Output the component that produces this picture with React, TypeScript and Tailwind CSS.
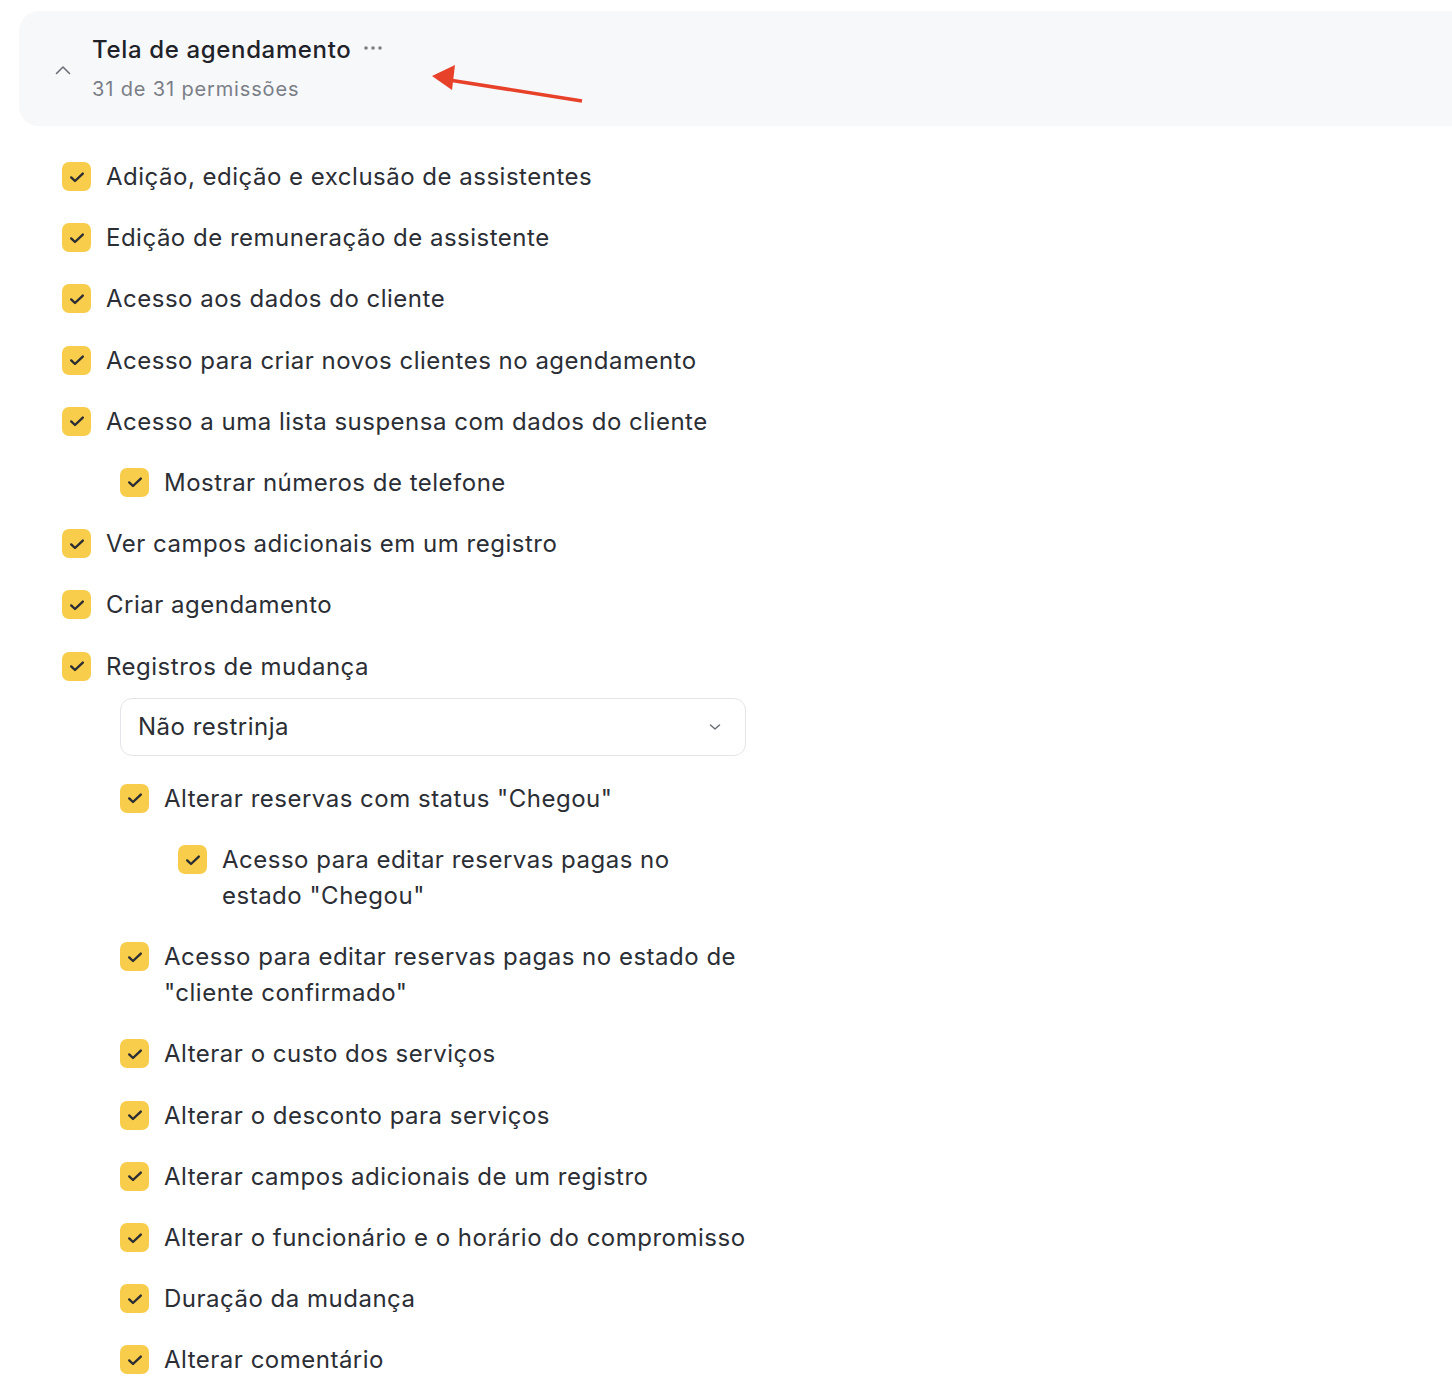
import React from "react";

type Row =
  | { kind: "check"; label: string; level: number }
  | { kind: "select"; value: string; level: number };

const rows: Row[] = [
  { kind: "check", level: 0, label: "Adição, edição e exclusão de assistentes" },
  { kind: "check", level: 0, label: "Edição de remuneração de assistente" },
  { kind: "check", level: 0, label: "Acesso aos dados do cliente" },
  { kind: "check", level: 0, label: "Acesso para criar novos clientes no agendamento" },
  { kind: "check", level: 0, label: "Acesso a uma lista suspensa com dados do cliente" },
  { kind: "check", level: 1, label: "Mostrar números de telefone" },
  { kind: "check", level: 0, label: "Ver campos adicionais em um registro" },
  { kind: "check", level: 0, label: "Criar agendamento" },
  { kind: "check", level: 0, label: "Registros de mudança" },
  { kind: "select", level: 1, value: "Não restrinja" },
  { kind: "check", level: 1, label: 'Alterar reservas com status "Chegou"' },
  { kind: "check", level: 2, label: 'Acesso para editar reservas pagas no estado "Chegou"' },
  { kind: "check", level: 1, label: 'Acesso para editar reservas pagas no estado de "cliente confirmado"' },
  { kind: "check", level: 1, label: "Alterar o custo dos serviços" },
  { kind: "check", level: 1, label: "Alterar o desconto para serviços" },
  { kind: "check", level: 1, label: "Alterar campos adicionais de um registro" },
  { kind: "check", level: 1, label: "Alterar o funcionário e o horário do compromisso" },
  { kind: "check", level: 1, label: "Duração da mudança" },
  { kind: "check", level: 1, label: "Alterar comentário" },
];

const indent = ["pl-0", "pl-[58px]", "pl-[116px]"];

const Checkbox = () => (
  <span className="mt-[3px] flex h-[29px] w-[29px] shrink-0 items-center justify-center rounded-[7px] bg-[#f8cd4b]">
    <svg width="16" height="16" viewBox="0 0 16 16" fill="none">
      <path
        d="M2.2 8.4l3.8 3.6L13.8 4.6"
        stroke="#2a2d33"
        strokeWidth="2.4"
        strokeLinecap="round"
        strokeLinejoin="round"
      />
    </svg>
  </span>
);

export default function App() {
  return (
    <div
      className="relative min-h-[1394px] w-full overflow-hidden bg-white pb-10 text-[#2b2e35]"
      style={{ fontFamily: "Inter, 'Noto Sans', sans-serif" }}
    >
      <div className="pl-[19px] pt-[11px]">
        <div className="flex h-[115px] items-center rounded-l-[20px] bg-[#f7f8fa] pl-[36px]">
          <svg width="16" height="10" viewBox="0 0 16 10" fill="none" className="mr-[21px] mt-[2px]">
            <path d="M1.5 8.5L8 2l6.5 6.5" stroke="#6b6f78" strokeWidth="1.6" strokeLinecap="round" strokeLinejoin="round" />
          </svg>
          <div className="flex flex-col gap-[9px]">
            <div className="flex items-center gap-[12px]">
              <span className="text-[24px] font-medium leading-[32px] tracking-[0.65px] text-[#1f2329]">Tela de agendamento</span>
              <svg width="20" height="6" viewBox="0 0 20 6" className="-mt-[4px]">
                <circle cx="3" cy="3" r="1.8" fill="#7a7e87" />
                <circle cx="10" cy="3" r="1.8" fill="#7a7e87" />
                <circle cx="17" cy="3" r="1.8" fill="#7a7e87" />
              </svg>
            </div>
            <span className="text-[20px] leading-[28px] tracking-[0.85px] text-[#7a7e87]">31 de 31 permissões</span>
          </div>
        </div>
      </div>

      <svg width="170" height="50" viewBox="0 0 170 50" className="absolute left-[425px] top-[62px]">
        <line x1="24" y1="18" x2="157" y2="39" stroke="#e8412a" strokeWidth="3.5" />
        <polygon points="7,14 30,3 27,28" fill="#e8412a" />
      </svg>

      <div className="ml-[62px] mt-[33px] flex w-[688px] flex-col gap-[25.2px]">
        {rows.map((row, i) =>
          row.kind === "select" ? (
            <div key={i} className={`${indent[row.level]} -mt-[12px] mr-[4px]`}>
              <div className="flex h-[58px] items-center justify-between rounded-[12px] border border-[#e3e5ea] bg-white pl-[17px] pr-[24px]">
                <span className="text-[24px] leading-[36px] tracking-[0.5px]">{row.value}</span>
                <svg width="12" height="8" viewBox="0 0 12 8" fill="none">
                  <path d="M1.5 2l4.5 4 4.5-4" stroke="#6b6f78" strokeWidth="1.5" strokeLinecap="round" strokeLinejoin="round" />
                </svg>
              </div>
            </div>
          ) : (
            <div key={i} className={`flex items-start gap-[15px] ${indent[row.level]}`}>
              <Checkbox />
              <span className="text-[24px] leading-[36px] tracking-[0.5px]">{row.label}</span>
            </div>
          )
        )}
      </div>
    </div>
  );
}
